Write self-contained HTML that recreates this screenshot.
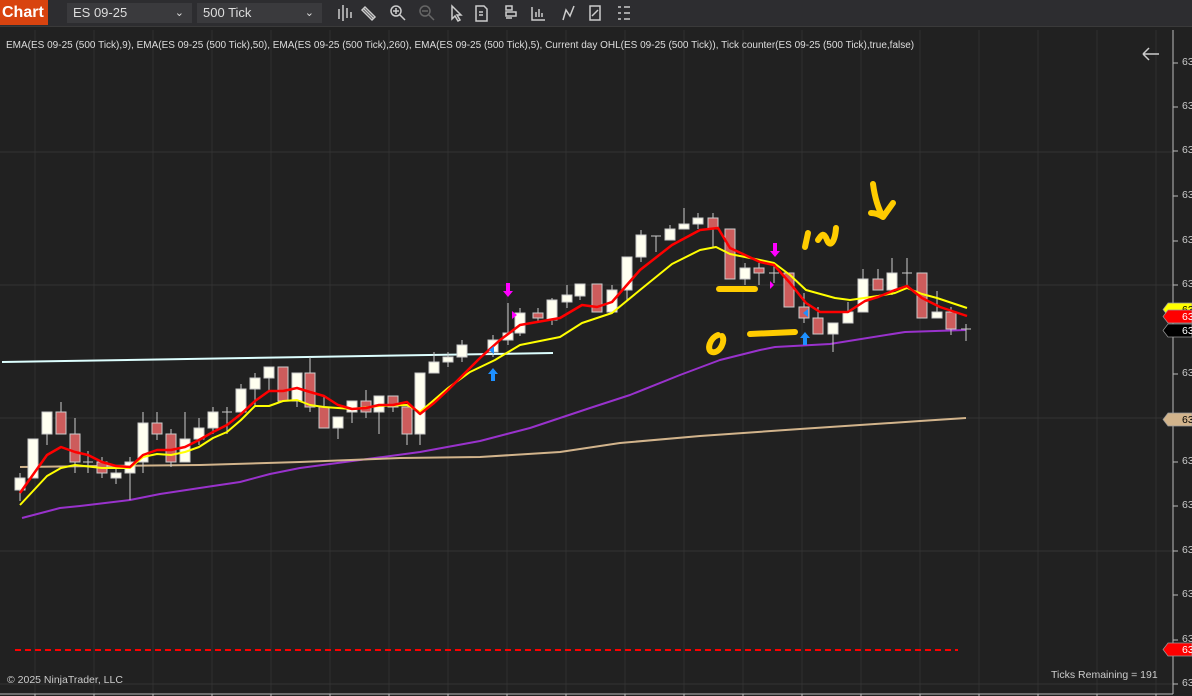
<!DOCTYPE html>
<html><head><meta charset="utf-8"><style>
*{margin:0;padding:0;box-sizing:border-box}
body{width:1192px;height:696px;background:#212121;overflow:hidden;font-family:"Liberation Sans",sans-serif;position:relative}
#tb{position:absolute;left:0;top:0;width:1192px;height:27px;background:#2d2d30;border-bottom:1px solid #3a3a3a}
#chart{position:absolute;left:0;top:0;width:48px;height:25px;background:#d8430f;color:#fff;font-size:16px;font-weight:bold;line-height:25px;padding-left:2px}
.dd{position:absolute;top:3px;height:20px;background:#3a3a3d;color:#ddd;font-size:13px;line-height:20px;padding-left:6px}
.dd span{position:absolute;right:8px;top:0;font-size:11px}
#leg{position:absolute;left:6px;top:40px;color:#ddd;font-size:10px;white-space:nowrap}
#cp{position:absolute;left:7px;top:674px;color:#ccc;font-size:10.5px}
#tr{position:absolute;left:1051px;top:669px;color:#ccc;font-size:10.5px}
.tk{position:absolute;left:1182px;color:#ccc;font-size:10.5px}
</style></head><body>
<svg id="s" width="1192" height="696" style="position:absolute;left:0;top:0"></svg>
<div id="tb"><div id="chart">Chart</div>
<div class="dd" style="left:67px;width:125px">ES 09-25<span>&#8964;</span></div>
<div class="dd" style="left:197px;width:125px">500 Tick<span>&#8964;</span></div>
<svg width="300" height="27" style="position:absolute;left:330px;top:0" stroke="#ccc" fill="none" stroke-width="1.5">
<path d="M9 9v10M13 5v16M17 8v10M21 12v6"/>
<path d="M33 8l10 10M32 10l3-3 10 10-3 3z"/>
<circle cx="66" cy="11" r="5"/><path d="M70 15l5 5M63 11h6M66 8v6"/>
<circle cx="95" cy="11" r="5" stroke="#666"/><path d="M99 15l5 5M92 11h6" stroke="#666"/>
<path d="M122 6v13l3-3 3 5 2-1-3-5h4z"/>
<path d="M146 6h8l3 3v12h-11zM149 12h4M149 15h4"/>
<path d="M176 6h6v4h-6zM176 12h10v4h-10zM176 18h6"/>
<path d="M202 7v13h13M206 17v-5M209 17v-8M212 17v-4"/>
<path d="M233 20l3-10 4 6 4-10"/>
<path d="M260 6h10v14h-10zM262 16l6-6"/>
<path d="M288 7h3M288 13h3M288 19h3M294 7h9M294 13h9M294 19h9"/>
</svg></div>
<div id="leg">EMA(ES 09-25 (500 Tick),9), EMA(ES 09-25 (500 Tick),50), EMA(ES 09-25 (500 Tick),260), EMA(ES 09-25 (500 Tick),5), Current day OHL(ES 09-25 (500 Tick)), Tick counter(ES 09-25 (500 Tick),true,false)</div>
<div id="cp">© 2025 NinjaTrader, LLC</div>
<div id="tr">Ticks Remaining = 191</div>
<script>
var s='';
for(var x=35;x<1173;x+=59)s+='<line x1="'+x+'" y1="30" x2="'+x+'" y2="694" stroke="#2f2f2f"/>';
for(var y=19;y<696;y+=133)if(y>30)s+='<line x1="0" y1="'+y+'" x2="1173" y2="'+y+'" stroke="#333"/>';
s+='<line x1="0" y1="694" x2="1173" y2="694" stroke="#bbb"/><line x1="1173" y1="30" x2="1173" y2="694" stroke="#bbb"/>';
for(var x=35;x<1173;x+=59)s+='<line x1="'+x+'" y1="694" x2="'+x+'" y2="696" stroke="#bbb"/>';
var tk=[63,107,151,196,241,285,374,462,506,551,595,640,684];
tk.forEach(function(y){s+='<line x1="1173" y1="'+y+'" x2="1178" y2="'+y+'" stroke="#bbb"/>';document.write('<div class="tk" style="top:'+(y-7)+'px">63</div>');});
s+='<line x1="15" y1="650" x2="958" y2="650" stroke="#f00" stroke-width="2" stroke-dasharray="6,4"/>';
s+='<line x1="2" y1="362" x2="553" y2="353" stroke="#dff" stroke-width="2"/>';
function pl(p,c,w){s+='<polyline fill="none" stroke="'+c+'" stroke-width="'+w+'" stroke-linejoin="round" points="'+p+'"/>';}
pl("22,518 60,508 80,506 130,500 160,494 213,486 240,482 270,474 300,468 360,460 420,452 480,441 530,428 590,408 630,395 680,375 720,360 760,350 775,347 830,344 905,332 966,330","#9932cc",2);
pl("20,467 100,466 200,465 300,462 400,458 480,457 560,452 620,443 700,436 800,429 860,425 920,421 966,418","#d2b48c",2);
var C=[[20,478,490,473,501,1],[33,439,478,439,478,1],[47,412,434,412,445,1],[61,412,434,402,434,0],[75,434,462,418,473,0],[88,462,462,451,473,2],[102,462,473,457,478,0],[116,473,478,467,484,1],[130,462,473,457,500,1],[143,423,462,412,473,1],[157,423,434,412,440,0],[171,434,462,429,467,0],[185,439,462,412,462,1],[199,428,439,418,445,1],[213,412,428,407,434,1],[227,412,412,407,434,2],[241,389,412,384,412,1],[255,378,389,373,407,1],[269,367,378,367,390,1],[283,367,401,367,401,0],[297,373,401,373,407,1],[310,373,407,357,412,0],[324,407,428,396,428,0],[338,417,428,417,439,1],[352,401,412,401,423,1],[366,401,412,390,418,0],[379,396,412,396,434,1],[393,396,407,396,412,0],[407,407,434,407,445,0],[420,373,434,373,445,1],[434,362,373,352,373,1],[448,357,362,352,367,1],[462,345,357,340,362,1],[493,340,352,335,357,1],[508,333,340,303,345,1],[520,313,333,308,336,1],[538,313,318,308,323,0],[552,300,320,298,325,1],[567,295,302,285,308,1],[580,284,296,284,300,1],[597,284,312,284,312,0],[612,290,312,285,312,1],[627,257,290,257,300,1],[641,235,257,230,262,1],[656,236,236,236,252,2],[670,229,240,225,240,1],[684,224,229,208,229,1],[698,218,224,213,229,1],[713,218,229,213,247,0],[730,229,279,229,279,0],[745,268,279,263,285,1],[759,268,273,263,285,0],[774,273,273,264,283,2],[789,273,307,273,307,0],[804,307,318,293,323,0],[818,318,334,307,334,0],[833,323,334,323,352,1],[848,312,323,302,323,1],[863,279,312,269,312,1],[878,279,290,269,290,0],[892,273,290,258,295,1],[907,273,273,258,285,2],[922,273,318,273,318,0],[937,312,318,291,318,1],[951,312,329,307,335,0],[966,329,329,324,341,2]];
C.forEach(function(c){var x=c[0];s+='<line x1="'+x+'" y1="'+c[3]+'" x2="'+x+'" y2="'+c[4]+'" stroke="#ccc"/>';
if(c[5]==2)s+='<line x1="'+(x-5)+'" y1="'+c[1]+'" x2="'+(x+5)+'" y2="'+c[1]+'" stroke="#ccc"/>';
else s+='<rect x="'+(x-5)+'" y="'+c[1]+'" width="10" height="'+Math.max(c[2]-c[1],3)+'" fill="'+(c[5]?'#fffff0':'#cd5c5c')+'" stroke="#ccc"/>';});
pl("20,505 47,476 61,468 75,465 102,468 130,468 143,457 157,454 171,455 185,452 199,447 213,438 227,432 241,420 255,406 269,406 283,401 297,400 310,405 324,407 352,409 379,406 407,405 420,412 434,400 448,388 470,372 495,360 520,345 560,337 582,323 612,313 640,290 672,264 700,250 716,247 730,254 760,260 774,263 790,275 806,290 835,298 850,300 878,296 895,293 907,288 922,294 937,298 967,308","#ffff00",2);
pl("20,493 47,455 61,447 75,452 88,455 102,462 116,466 130,467 143,455 157,450 171,450 185,447 199,440 213,432 227,425 241,414 255,401 269,391 283,391 297,388 310,392 324,396 338,405 352,409 366,408 379,405 393,405 407,402 420,414 434,403 448,390 480,358 500,340 520,325 560,318 582,305 597,307 612,302 640,270 672,245 700,230 718,228 730,248 760,262 774,265 790,283 806,303 820,312 848,312 865,301 878,297 895,290 907,286 922,298 940,307 967,316","#ff0000",2.5);
s+='<path d="M506 283h4v8h3l-5 6-5-6h3z" fill="#f0f"/><path d="M512 311l5 4-5 4z" fill="#f0f"/>';
s+='<path d="M489 350l5-4v8z" fill="#1e90ff"/><path d="M491 381v-7h-3l5-6 5 6h-3v7z" fill="#1e90ff"/>';
s+='<path d="M773 243h4v8h3l-5 6-5-6h3z" fill="#f0f"/><path d="M770 281l4 4-4 4z" fill="#f0f"/>';
s+='<path d="M803 313l5-4v8z" fill="#1e90ff"/><path d="M803 345v-7h-3l5-6 5 6h-3v7z" fill="#1e90ff"/>';
var Y='fill="none" stroke="#ffcc00" stroke-width="6" stroke-linecap="round" stroke-linejoin="round"';
s+='<path d="M719 289h36" '+Y+'/><path d="M750 334l45-2" '+Y+'/>';
s+='<path d="M718 335c-8 3-12 15-6 17 8 2 14-12 10-16" '+Y+'/>';
s+='<path d="M808 233l-3 14" '+Y+'/><path d="M818 240c4-6 6-8 9 0s8 2 9-12" '+Y+'/>';
s+='<path d="M873 184c2 15 6 26 10 33l10-14M883 217c-6-4-10-4-12-4" '+Y+'/>';
function mk(y,c,t){s+='<path d="M1168 '+(y-6)+'h24v13h-24l-5-6.5z" fill="'+c+'" stroke="#999" stroke-width=".7"/><text x="1182" y="'+(y+4)+'" font-size="10.5" fill="'+t+'" font-family="Liberation Sans">63</text>';}
mk(309,"#ffff00","#000");mk(316,"#ff0000","#fff");mk(330,"#000","#fff");mk(419,"#d2b48c","#000");mk(649,"#ff0000","#fff");
s+='<path d="M1143 54h16M1143 54l6-6M1143 54l6 6" stroke="#ccc" stroke-width="1.5" fill="none"/>';
document.getElementById('s').innerHTML=s;
</script>
</body></html>
